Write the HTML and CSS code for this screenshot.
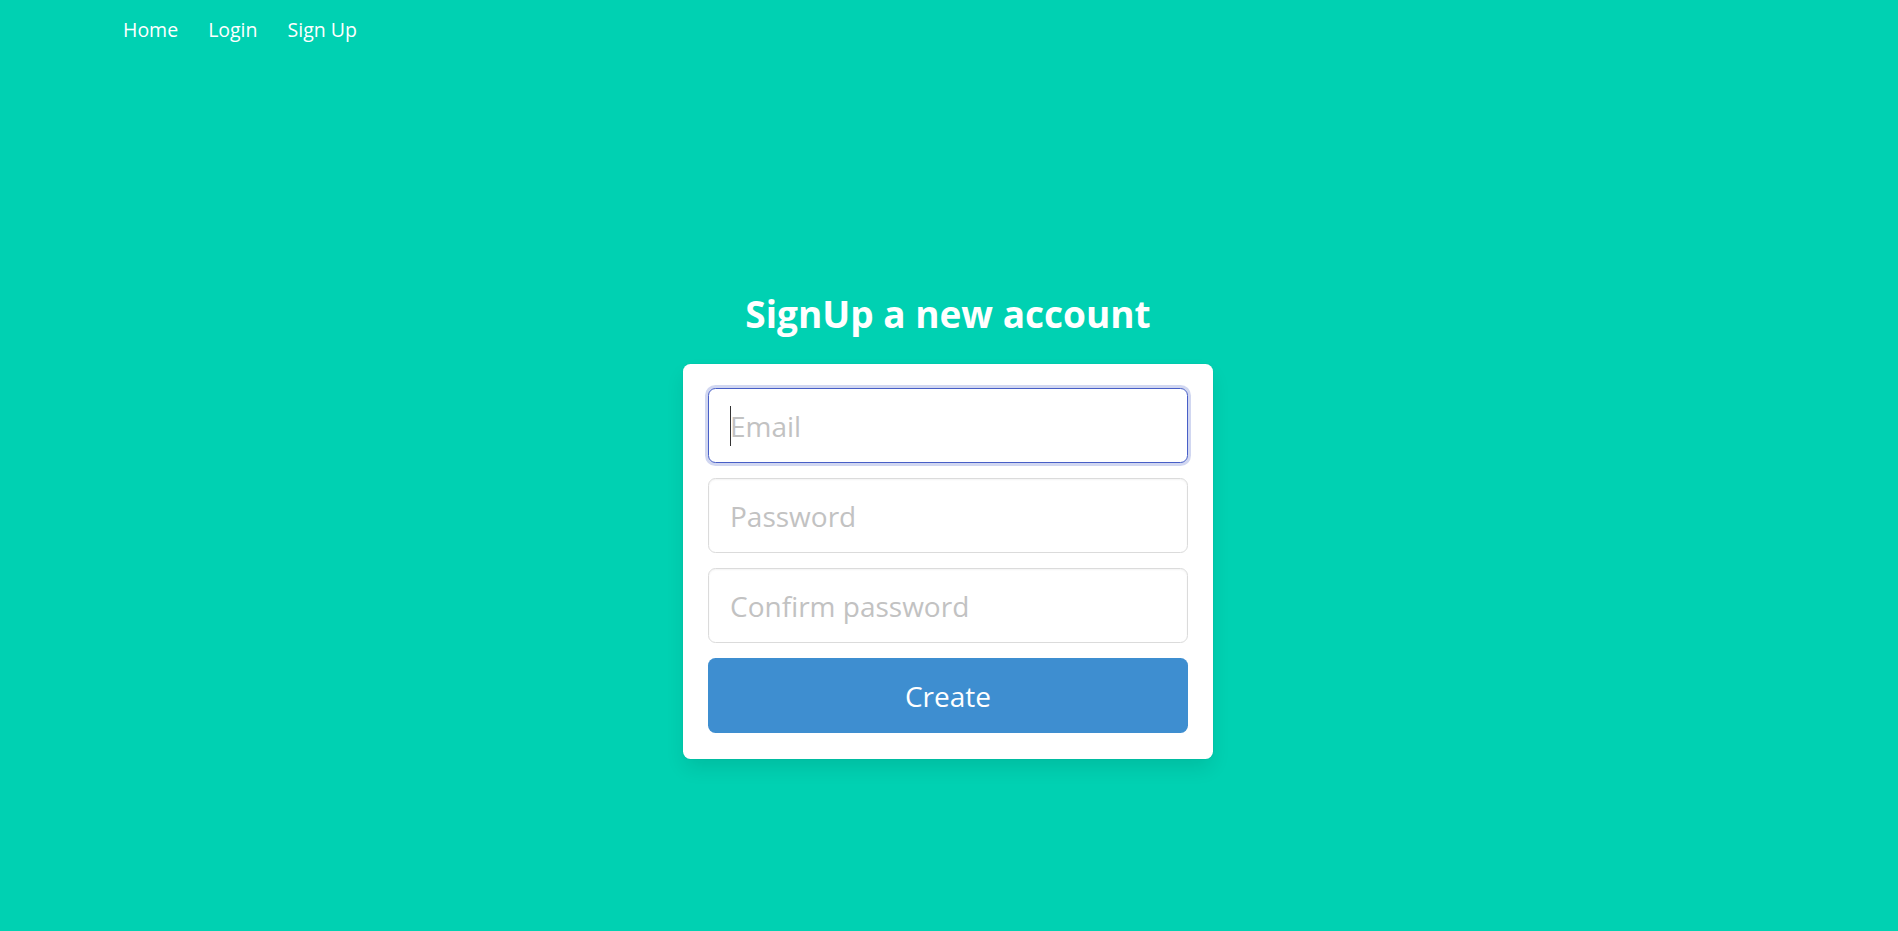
FILE: index.html
```html
<!DOCTYPE html>
<html lang="en">
<head>
<meta charset="utf-8">
<title>Sign Up</title>
<link rel="stylesheet" href="styles.css">
</head>
<body>
<nav class="navbar">
  <div class="navbar-menu">
    <a class="navbar-item" href="#">Home</a>
    <a class="navbar-item" href="#">Login</a>
    <a class="navbar-item" href="#">Sign Up</a>
  </div>
</nav>
<main class="hero">
  <h1 class="title">SignUp a new account</h1>
  <form class="box">
    <div class="field">
      <div class="control">
        <input class="input is-focused" type="email" placeholder="Email">
        <span class="caret"></span>
      </div>
    </div>
    <div class="field">
      <div class="control">
        <input class="input" type="password" placeholder="Password">
      </div>
    </div>
    <div class="field">
      <div class="control">
        <input class="input" type="password" placeholder="Confirm password">
      </div>
    </div>
    <button class="button" type="button">Create</button>
  </form>
</main>
</body>
</html>
```
FILE: styles.css
```css
* { box-sizing: border-box; }
html, body {
  margin: 0;
  height: 100%;
}
body {
  background: #00d1b2;
  font-family: "Open Sans", "Noto Sans", sans-serif;
  color: #4a4a4a;
}
.navbar {
  height: 60px;
  display: flex;
  align-items: stretch;
}
.navbar-menu {
  display: flex;
  align-items: center;
  padding-left: 108px;
}
.navbar-item {
  color: #fff;
  text-decoration: none;
  font-size: 19.5px;
  line-height: 30px;
  padding: 0 15px;
}
.hero {
  display: flex;
  flex-direction: column;
  align-items: center;
  padding-top: 231px;
  padding-right: 2px;
}
.title {
  margin: 0 0 28px;
  color: #fff;
  font-size: 37px;
  font-weight: 700;
  line-height: 45px;
}
.box {
  width: 530px;
  background: #fff;
  border-radius: 7.5px;
  padding: 24px 25px 26px;
  box-shadow: 0 10px 20px -2.5px rgba(10,10,10,0.1), 0 0 0 1px rgba(10,10,10,0.02);
  margin: 0;
}
.field { margin-bottom: 15px; }
.control { position: relative; }
.input {
  display: block;
  width: 100%;
  height: 75px;
  font-family: inherit;
  font-size: 28px;
  padding: 0 21px;
  border: 1px solid #dbdbdb;
  border-radius: 7.5px;
  background: #fff;
  color: #363636;
  outline: none;
  box-shadow: inset 0 1px 2px rgba(10,10,10,0.05);
}
.input::placeholder { color: #c2c2c2; }
.input.is-focused {
  border-color: #485fc7;
  box-shadow: 0 0 0 3px rgba(72,95,199,0.25);
}
.caret {
  position: absolute;
  left: 22px;
  top: 18px;
  width: 1px;
  height: 40px;
  background: #333;
}
.button {
  display: block;
  width: 100%;
  height: 75px;
  border: 0;
  border-radius: 7.5px;
  background: #3e8ed0;
  color: #fff;
  font-family: inherit;
  font-size: 28px;
  cursor: pointer;
}
```
